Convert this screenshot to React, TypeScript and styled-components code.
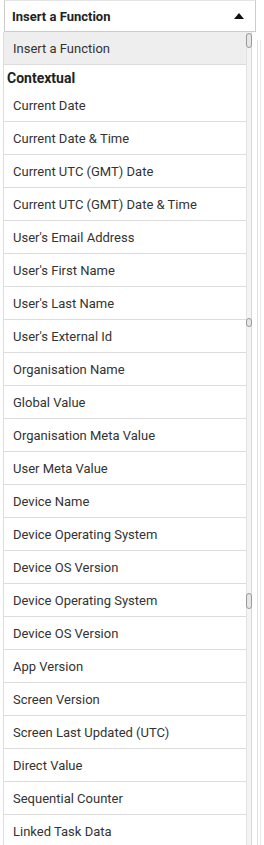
import React from "react";
import styled, { createGlobalStyle } from "styled-components";

const GlobalStyle = createGlobalStyle`
  html, body {
    margin: 0;
    padding: 0;
    background: #fff;
    overflow: hidden;
  }
  body {
    font-family: Roboto, "Liberation Sans", sans-serif;
    color: #333;
  }
`;

const items = [
  "Current Date",
  "Current Date & Time",
  "Current UTC (GMT) Date",
  "Current UTC (GMT) Date & Time",
  "User's Email Address",
  "User's First Name",
  "User's Last Name",
  "User's External Id",
  "Organisation Name",
  "Global Value",
  "Organisation Meta Value",
  "User Meta Value",
  "Device Name",
  "Device Operating System",
  "Device OS Version",
  "Device Operating System",
  "Device OS Version",
  "App Version",
  "Screen Version",
  "Screen Last Updated (UTC)",
  "Direct Value",
  "Sequential Counter",
  "Linked Task Data",
];

// the screenshot caught the scrollbar thumb in a few places
const thumbs = [
  { top: 1, height: 15 },
  { top: 286, height: 9 },
  { top: 561, height: 16 },
];

function App() {
  return <Page>
    <GlobalStyle />
    <Select>
      <SelectLabel>Insert a Function</SelectLabel>
      <Caret />
    </Select>
    <Body>
      <List>
        <Option selected>Insert a Function</Option>
        <GroupLabel>Contextual</GroupLabel>
        {items.map((item, idx) => <Option key={idx}>{item}</Option>)}
      </List>
      <Scrollbar>
        {thumbs.map((t, idx) => <Thumb key={idx} style={{ top: t.top, height: t.height }} />)}
      </Scrollbar>
      <BackTrack />
    </Body>
  </Page>;
}

const Page = styled.div`
  width: 264px;
  height: 845px;
  overflow: hidden;
  display: flex;
  flex-direction: column;
`;

const Select = styled.div`
  margin-left: 4px;
  width: 252px;
  height: 32px;
  box-sizing: border-box;
  border: 1px solid #ccc;
  border-top-color: #e4e4e4;
  display: flex;
  align-items: center;
  justify-content: space-between;
  padding: 0 11px 0 7px;
  background: #fff;
`;

const SelectLabel = styled.span`
  font-size: 13px;
  font-weight: 700;
  color: #222;
`;

const Caret = styled.span`
  width: 0;
  height: 0;
  border-left: 5px solid transparent;
  border-right: 5px solid transparent;
  border-bottom: 6px solid #111;
  margin-top: -1px;
`;

const Body = styled.div`
  display: flex;
  flex: 1;
  min-height: 0;
`;

const List = styled.div`
  margin-left: 3px;
  width: 242px;
  border-left: 1px solid #ddd;
  display: flex;
  flex-direction: column;
`;

interface OptionProps {
  readonly selected?: boolean;
}
const Option = styled.div<OptionProps>`
  flex: none;
  height: 33px;
  box-sizing: border-box;
  border-bottom: 1px solid #ddd;
  padding-left: 9px;
  display: flex;
  align-items: center;
  font-size: 13px;
  color: #333;
  background: ${({ selected }) => selected ? "#eeeeee" : "#fff"};
`;

const GroupLabel = styled.div`
  flex: none;
  height: 24px;
  padding: 5px 0 0 3px;
  box-sizing: border-box;
  font-size: 14px;
  font-weight: 700;
  color: #222;
`;

const Scrollbar = styled.div`
  width: 6px;
  box-sizing: border-box;
  border-left: 1px solid #e2e2e2;
  border-right: 1px solid #d8d8d8;
  background: #f4f4f4;
  position: relative;
`;

const Thumb = styled.div`
  position: absolute;
  left: -1px;
  width: 6px;
  box-sizing: border-box;
  border: 1px solid #999;
  border-radius: 3px;
  background: #e6e6e6;
`;

const BackTrack = styled.div`
  margin-top: 8px;
  margin-left: 5px;
  width: 2px;
  border-left: 1px solid #e0e0e0;
  border-right: 1px solid #e8e8e8;
`;

export default App;
